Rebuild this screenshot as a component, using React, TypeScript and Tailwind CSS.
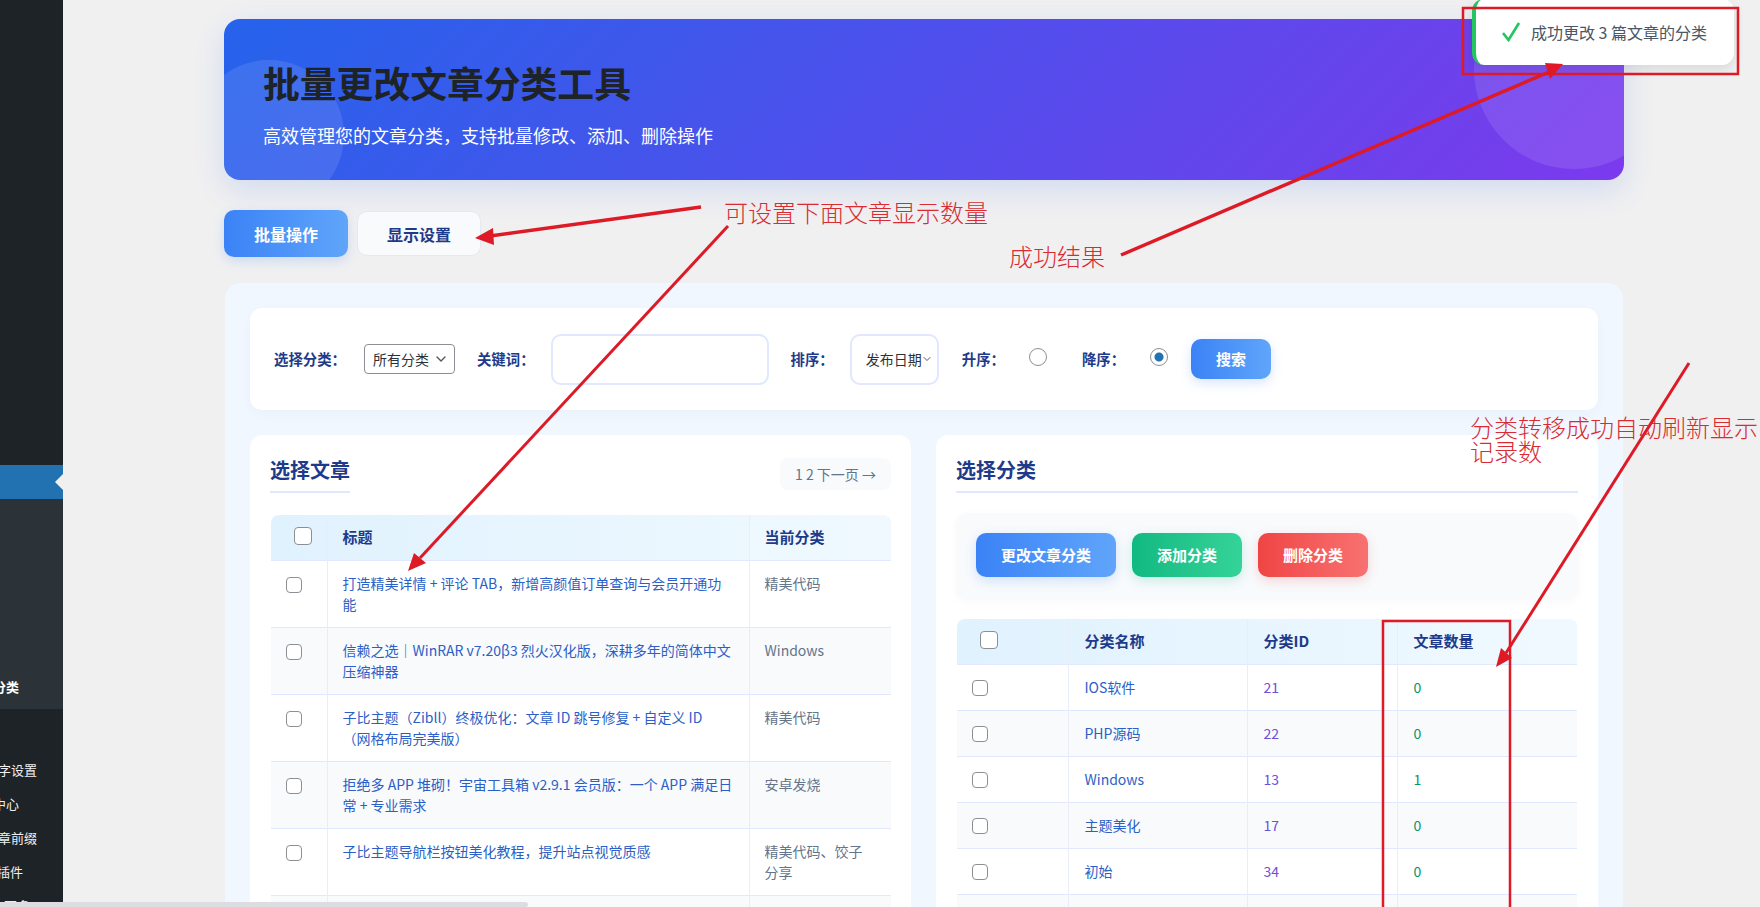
import { ChevronDown } from "lucide-react";

const posts = [
  { title: "打造精美详情 + 评论 TAB\uFF0C新增高颜值订单查询与会员开通功能", cat: "精美代码" },
  { title: "信赖之选\uFF5CWinRAR v7.20β3 烈火汉化版\uFF0C深耕多年的简体中文压缩神器", cat: "Windows" },
  { title: "子比主题\uFF08Zibll\uFF09终极优化\uFF1A文章 ID 跳号修复 + 自定义 ID\n\uFF08网格布局完美版\uFF09", cat: "精美代码" },
  { title: "拒绝多 APP 堆砌\uFF01宇宙工具箱 v2.9.1 会员版\uFF1A一个 APP 满足日常 + 专业需求", cat: "安卓发烧" },
  { title: "子比主题导航栏按钮美化教程\uFF0C提升站点视觉质感", cat: "精美代码、饺子分享" },
];

const cats = [
  { name: "IOS软件", id: 21, count: 0 },
  { name: "PHP源码", id: 22, count: 0 },
  { name: "Windows", id: 13, count: 1 },
  { name: "主题美化", id: 17, count: 0 },
  { name: "初始", id: 34, count: 0 },
];

const sideItems = [
  { label: "文字设置", cls: "w-[37px]" },
  { label: "用户中心", cls: "w-[19px]" },
  { label: "文章前缀", cls: "w-[37px]" },
  { label: "插件", cls: "w-[23px]" },
  { label: "更多", cls: "w-[30px]" },
];

function Check({ head, lift }: { head?: boolean; lift?: boolean }) {
  return (
    <input
      type="checkbox"
      readOnly
      className={
        "block appearance-none rounded-[4px] border border-[#8c8f94] bg-white " +
        (head ? "-mt-[2px] h-[18px] w-[18px]" : "h-4 w-4") +
        (lift ? " mt-[2px]" : "")
      }
    />
  );
}

function Label({ children }: { children: string }) {
  return <span className="text-[14.4px] font-semibold text-[#1e3a8a] whitespace-nowrap">{children + "\uFF1A"}</span>;
}

function Sidebar() {
  return (
    <aside className="flex h-full w-[63px] shrink-0 flex-col overflow-hidden bg-[#1d2327] text-[13px] text-[#f0f0f1]">
      <div className="h-[465px] shrink-0" />
      <div className="relative h-[34px] shrink-0 bg-[#2271b1]">
        <span className="absolute right-0 top-[9px] h-0 w-0 border-y-8 border-r-8 border-y-transparent border-r-[#f0f0f1]" />
      </div>
      <div className="flex h-[210px] shrink-0 flex-col justify-end bg-[#2c3338] pb-[12px]">
        <div className="flex h-5 w-[19px] items-center justify-end whitespace-nowrap font-semibold text-white">批量分类</div>
      </div>
      <div className="flex flex-col pt-[44px]">
        {sideItems.map((s) => (
          <div key={s.label} className={"flex h-[34px] items-center justify-end whitespace-nowrap " + s.cls}>
            {s.label}
          </div>
        ))}
      </div>
    </aside>
  );
}

function Banner() {
  return (
    <div className="relative h-[161px] overflow-hidden rounded-2xl bg-[linear-gradient(135deg,#2563eb,#7c3aed)] pl-[39px] pt-[37px]">
      <div className="absolute -bottom-[30px] -left-[30px] h-[150px] w-[150px] rounded-full bg-white/10" />
      <div className="absolute -right-[50px] -top-[50px] h-[200px] w-[200px] rounded-full bg-white/10" />
      <h1 className="relative text-[36.8px] font-bold leading-[52px] text-[#1d2327]">批量更改文章分类工具</h1>
      <p className="relative mt-[13px] text-lg leading-[28px] text-white">{"高效管理您的文章分类\uFF0C支持批量修改、添加、删除操作"}</p>
    </div>
  );
}

function Filters() {
  return (
    <div className="flex h-[102px] items-center rounded-xl bg-white pl-6 shadow-[0_4px_12px_rgba(30,58,138,0.03)]">
      <div className="flex items-center gap-[18px]">
        <Label>选择分类</Label>
        <div className="relative">
          <select className="block h-[30px] w-[91px] appearance-none rounded border border-[#8c8f94] bg-white pl-2 text-sm text-[#2c3338]">
            <option>所有分类</option>
          </select>
          <ChevronDown className="pointer-events-none absolute right-[6px] top-[7px] h-4 w-4 text-[#50575e]" />
        </div>
      </div>
      <div className="ml-[22px] flex items-center gap-4">
        <Label>关键词</Label>
        <input type="text" readOnly className="h-[51px] w-[218px] rounded-[10px] border-2 border-[#e0e7ff] bg-white" />
      </div>
      <div className="ml-[22px] flex items-center gap-4">
        <Label>排序</Label>
        <div className="relative">
          <select className="block h-[51px] w-[89px] appearance-none rounded-[10px] border-2 border-[#e0e7ff] bg-white pl-[14px] text-sm text-[#2c3338]">
            <option>发布日期</option>
          </select>
          <ChevronDown className="pointer-events-none absolute right-[6px] top-[19px] h-3 w-3 text-[#50575e]" />
        </div>
      </div>
      <div className="ml-[23px] flex items-center gap-6">
        <Label>升序</Label>
        <input type="radio" name="order" readOnly className="-mt-1 h-[18px] w-[18px] appearance-none rounded-full border border-[#8c8f94] bg-white" />
      </div>
      <div className="ml-[35px] flex items-center gap-[25px]">
        <Label>降序</Label>
        <input
          type="radio"
          name="order"
          readOnly
          checked
          className="-mt-1 h-[18px] w-[18px] appearance-none rounded-full border border-[#8c8f94] bg-[radial-gradient(circle,#2271b1_0,#2271b1_4px,#ffffff_5px)]"
        />
      </div>
      <button className="ml-[23px] h-10 w-20 rounded-[10px] bg-gradient-to-r from-[#3b82f6] to-[#60a5fa] text-[15px] font-semibold text-white shadow-[0_4px_12px_rgba(59,130,246,0.2)]">
        搜索
      </button>
    </div>
  );
}

function PostsCard() {
  return (
    <div className="min-w-0 flex-1 rounded-t-xl bg-white pl-5 pr-[20px] pt-4">
      <div className="flex items-start justify-between">
        <h2 className="h-[42px] border-b-2 border-[#e0e7ff] text-xl font-bold leading-[38px] text-[#1e3a8a]">选择文章</h2>
        <div className="mt-[7px] h-8 w-[111px] rounded-lg bg-[#f8fafc] text-center text-sm leading-8 text-[#64748b]">1 2 下一页 →</div>
      </div>
      <div className="ml-[1px] mt-[22px] overflow-hidden rounded-lg">
        <table className="w-[621px] table-fixed border-collapse text-sm">
          <colgroup>
            <col className="w-[56px]" />
            <col className="w-[422px]" />
            <col className="w-[143px]" />
          </colgroup>
          <thead className="bg-gradient-to-r from-[#e0f2fe] to-[#f0f9ff] text-[15px] text-[#1e3a8a]">
            <tr className="h-[45px] border-b border-[#e0e7ff] text-left">
              <th className="border-r border-[#e8ecfb] pl-[23px]">
                <Check head />
              </th>
              <th className="border-r border-[#e8ecfb] pb-[2px] pl-[15px] font-semibold">标题</th>
              <th className="pb-[2px] pl-[15px] font-semibold">当前分类</th>
            </tr>
          </thead>
          <tbody>
            {posts.map((p, i) => (
              <tr key={p.title} className={"h-[67px] border-b border-[#e0e7ff] align-top " + (i % 2 ? "bg-[#f8fafc]" : "bg-white")}>
                <td className="border-r border-[#e8ecfb] pl-[15px] pt-4">
                  <Check />
                </td>
                <td className="whitespace-pre-line border-r border-[#e8ecfb] py-3 pl-[15px] pr-4 leading-[21px] text-[#2b5fc7]">{p.title}</td>
                <td className="py-3 pl-[15px] pr-4 leading-[21px] text-[#64748b]">{p.cat}</td>
              </tr>
            ))}
            <tr className="h-[30px] bg-[#f8fafc]">
              <td className="border-r border-[#e8ecfb]" />
              <td className="border-r border-[#e8ecfb]" />
              <td />
            </tr>
          </tbody>
        </table>
      </div>
    </div>
  );
}

function CatsCard() {
  return (
    <div className="w-[662px] shrink-0 rounded-t-xl bg-white px-5 pt-4">
      <h2 className="h-[42px] border-b-2 border-[#e0e7ff] text-xl font-bold leading-[38px] text-[#1e3a8a]">选择分类</h2>
      <div className="mt-5 flex h-[87px] gap-4 rounded-xl bg-[#f8fafc] p-5 shadow-[0_2px_8px_rgba(30,58,138,0.03)]">
        <button className="h-11 w-[140px] rounded-[10px] bg-gradient-to-r from-[#3b82f6] to-[#60a5fa] text-[15px] font-semibold text-white shadow-[0_4px_12px_rgba(59,130,246,0.2)]">
          更改文章分类
        </button>
        <button className="h-11 w-[110px] rounded-[10px] bg-gradient-to-r from-[#10b981] to-[#34d399] text-[15px] font-semibold text-white shadow-[0_4px_12px_rgba(16,185,129,0.2)]">
          添加分类
        </button>
        <button className="h-11 w-[110px] rounded-[10px] bg-gradient-to-r from-[#ef4444] to-[#f87171] text-[15px] font-semibold text-white shadow-[0_4px_12px_rgba(239,68,68,0.2)]">
          删除分类
        </button>
      </div>
      <div className="ml-[1px] mt-[19px] w-[620px] overflow-hidden rounded-lg">
        <table className="w-[620px] table-fixed border-collapse text-sm">
          <colgroup>
            <col className="w-[111px]" />
            <col className="w-[179px]" />
            <col className="w-[150px]" />
            <col className="w-[180px]" />
          </colgroup>
          <thead className="bg-gradient-to-r from-[#e0f2fe] to-[#f0f9ff] text-[15px] text-[#1e3a8a]">
            <tr className="h-[45px] border-b border-[#e0e7ff] text-left">
              <th className="border-r border-[#e8ecfb] pl-[23px]">
                <Check head />
              </th>
              <th className="border-r border-[#e8ecfb] pb-[2px] pl-4 font-semibold">分类名称</th>
              <th className="border-r border-[#e8ecfb] pb-[2px] pl-4 font-semibold">分类ID</th>
              <th className="pb-[2px] pl-4 font-semibold">文章数量</th>
            </tr>
          </thead>
          <tbody>
            {cats.map((c, i) => (
              <tr key={c.id} className={"h-[46px] border-b border-[#e0e7ff] " + (i % 2 ? "bg-[#f8fafc]" : "bg-white")}>
                <td className="border-r border-[#e8ecfb] pl-[15px]">
                  <Check lift />
                </td>
                <td className="border-r border-[#e8ecfb] pl-4 text-[#2b5fc7]">{c.name}</td>
                <td className="border-r border-[#e8ecfb] pl-4 text-[#6d4fd8]">{c.id}</td>
                <td className="pl-4 text-[#059669]">{c.count}</td>
              </tr>
            ))}
            <tr className="h-[30px] bg-[#f8fafc]">
              <td className="border-r border-[#e8ecfb]" />
              <td className="border-r border-[#e8ecfb]" />
              <td className="border-r border-[#e8ecfb]" />
              <td />
            </tr>
          </tbody>
        </table>
      </div>
    </div>
  );
}

function Toast() {
  return (
    <div className="absolute -top-[1px] left-[1472px] flex h-[66px] w-[262px] items-center rounded-xl border-l-4 border-[#22c55e] bg-white pl-[26px] shadow-[0_4px_12px_rgba(0,0,0,0.1)]">
      <svg width="20" height="20" viewBox="0 0 20 20" className="shrink-0">
        <path d="M1 11 L6.5 18 L17 1" fill="none" stroke="#22c55e" strokeWidth="2.6" />
      </svg>
      <span className="ml-[9px] whitespace-nowrap text-base text-[#4b5563]">成功更改 3 篇文章的分类</span>
    </div>
  );
}

// red markup drawn on top of the screenshot
function Annotations() {
  const red = "#dd1a25";
  return (
    <>
      <svg className="pointer-events-none absolute left-0 top-0" width="1760" height="907">
        <rect x="1463" y="8" width="275" height="66" fill="none" stroke={red} strokeWidth="2.5" />
        <rect x="1383" y="621" width="127" height="320" fill="none" stroke={red} strokeWidth="2.5" />
        <line x1="701" y1="207" x2="490" y2="236" stroke={red} strokeWidth="3.5" />
        <polygon points="475,238 493,228 494,245" fill={red} />
        <line x1="728" y1="226" x2="420" y2="558" stroke={red} strokeWidth="3" />
        <polygon points="408,571 414,553 426,563" fill={red} />
        <line x1="1121" y1="255" x2="1549" y2="72" stroke={red} strokeWidth="3.5" />
        <polygon points="1563,64 1545,63 1550,79" fill={red} />
        <line x1="1689" y1="363" x2="1506" y2="653" stroke={red} strokeWidth="3" />
        <polygon points="1496,667 1501,648 1512,658" fill={red} />
      </svg>
      <span className="absolute left-[724px] top-[196px] whitespace-nowrap text-[24px] font-light leading-8 text-[#d92b32]">可设置下面文章显示数量</span>
      <span className="absolute left-[1009px] top-[240px] whitespace-nowrap text-[24px] font-light leading-8 text-[#d92b32]">成功结果</span>
      <span className="absolute left-[1470px] top-[415px] w-[290px] text-[24px] font-light leading-6 text-[#d92b32]">分类转移成功自动刷新显示记录数</span>
    </>
  );
}

export default function App() {
  return (
    <div className="relative flex h-[907px] w-[1760px] overflow-hidden bg-[#f0f0f1] font-['Noto_Sans_CJK_SC','Noto_Sans',sans-serif]">
      <Sidebar />
      <main className="ml-[161px] w-[1400px] shrink-0 pt-[19px]">
        <div className="rounded-2xl shadow-[0_10px_30px_rgba(37,99,235,0.15)]">
          <Banner />
        </div>
        <div className="mt-[30px] flex items-center gap-[9px]">
          <button className="h-[47px] w-[124px] rounded-[10px] bg-gradient-to-r from-[#3b82f6] to-[#60a5fa] text-base font-semibold text-white shadow-[0_4px_12px_rgba(59,130,246,0.2)]">
            批量操作
          </button>
          <button className="h-[45px] w-[124px] rounded-[10px] border border-[#e3e8f2] bg-[#f8fafc] text-base font-semibold text-[#1e3a8a]">
            显示设置
          </button>
        </div>
        <div className="mx-[1px] mt-[26px] rounded-t-2xl bg-[#f0f7ff] px-[25px] pt-[25px]">
          <Filters />
          <div className="mt-[25px] flex gap-[25px]">
            <PostsCard />
            <CatsCard />
          </div>
        </div>
      </main>
      <Toast />
      <Annotations />
      <div className="absolute bottom-0 left-0 h-[5px] w-[528px] rounded-r-[3px] bg-[#dcdde1]" />
    </div>
  );
}
